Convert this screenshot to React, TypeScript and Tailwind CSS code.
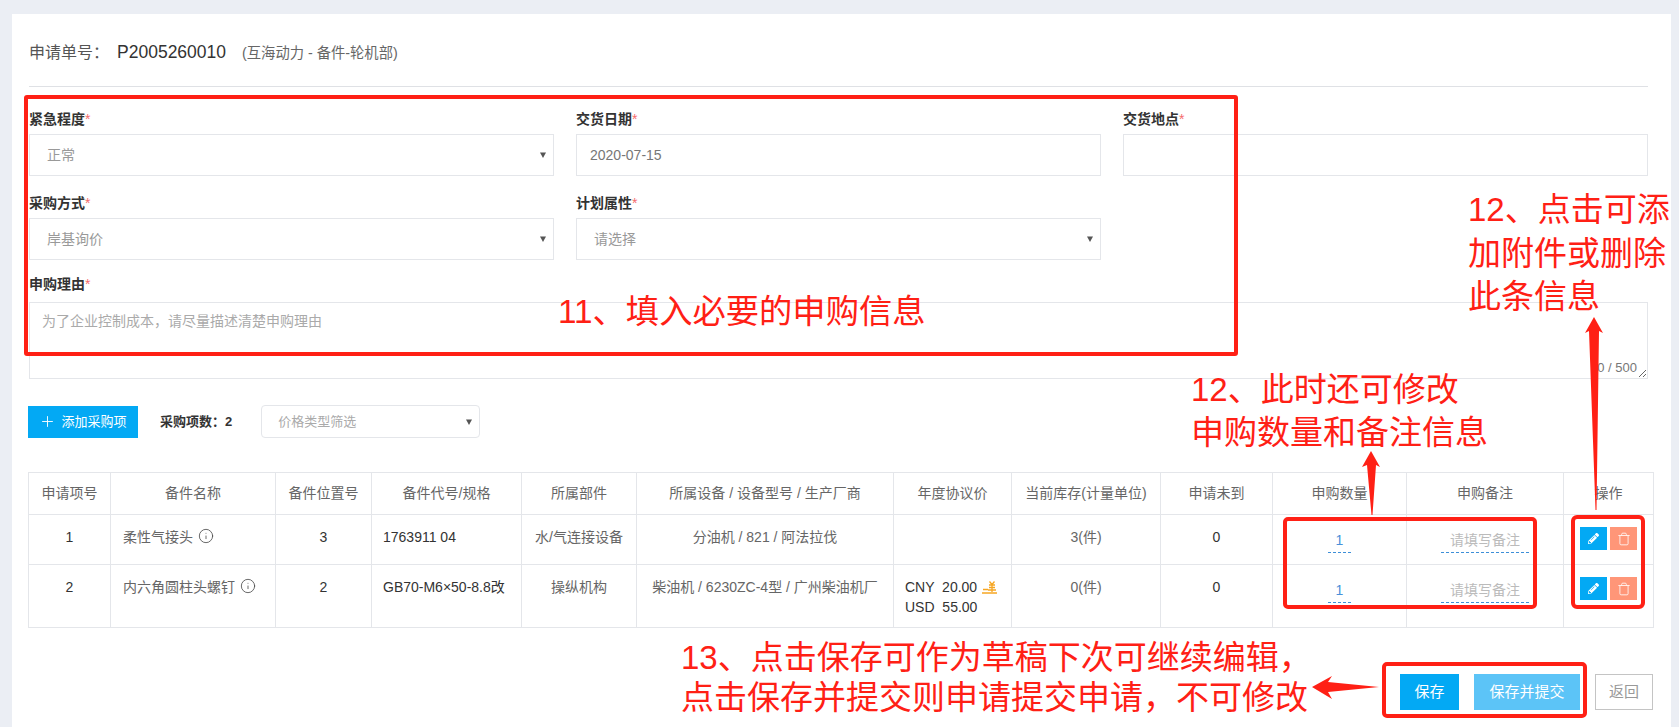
import { Info, Plus, Trash } from "lucide-react";
import { FaPencilAlt } from "react-icons/fa";

// full-width punctuation
const COLON = "\uFF1A";
const COMMA = "\uFF0C";

const Caret = () => (
  <svg width="8" height="7" viewBox="0 0 8 7" className="absolute right-[6px] top-1/2 -translate-y-1/2">
    <path d="M1 1h6L4 6.5z" fill="#555" />
  </svg>
);

const Label = ({ text }: { text: string }) => (
  <div className="h-5 leading-5 text-[14px] font-semibold text-[#333] mb-[5px]">
    {text}
    <span className="text-[#f56c6c] font-normal">*</span>
  </div>
);

const SelectBox = ({ value }: { value: string }) => (
  <div className="relative h-[42px] border border-[#e4e6ea] pl-[17px] flex items-center text-[14px] text-[#999]">
    {value}
    <Caret />
  </div>
);

const YuanIcon = () => (
  <svg width="15" height="13" viewBox="0 0 15 13" className="inline-block ml-[5px] -mt-[1px]">
    <path
      d="M0 12h15M1 8.500h5M7.500 0.500l2.500 3 2.500-3M7 4h6M7 6.500h6M6 9h8M10 4v7"
      fill="none"
      stroke="#f6a623"
      strokeWidth="1.3"
    />
  </svg>
);

const QtyInput = () => (
  <div className="mx-auto mt-[2px] w-[23px] h-[24px] leading-[22px] text-center text-[#4a90d9] border-b border-dashed border-[#3d8fd8]">
    1
  </div>
);

const RemarkInput = () => (
  <div className="mx-auto mt-[2px] w-[88px] h-[24px] leading-[22px] text-center text-[#bbb] border-b border-dashed border-[#3d8fd8]">
    请填写备注
  </div>
);

const Actions = () => (
  <div className="flex justify-center gap-[3px]">
    <button className="w-[27px] h-[23px] bg-[#03a9f4] flex items-center justify-center text-white">
      <FaPencilAlt size={11} />
    </button>
    <button className="w-[27px] h-[23px] bg-[#ff9678] flex items-center justify-center text-[#fff2ee]">
      <Trash size={14} strokeWidth={1.6} />
    </button>
  </div>
);

const headers = [
  "申请项号",
  "备件名称",
  "备件位置号",
  "备件代号/规格",
  "所属部件",
  "所属设备 / 设备型号 / 生产厂商",
  "年度协议价",
  "当前库存(计量单位)",
  "申请未到",
  "申购数量",
  "申购备注",
  "操作",
];

const widths = [82, 165, 96, 150, 115, 257, 118, 149, 112, 134, 157, 90];

const rows = [
  {
    no: "1",
    name: "柔性气接头",
    pos: "3",
    code: "1763911 04",
    part: "水/气连接设备",
    equip: "分油机 / 821 / 阿法拉伐",
    stock: "3(件)",
    height: "h-[50px]",
  },
  {
    no: "2",
    name: "内六角圆柱头螺钉",
    pos: "2",
    code: "GB70-M6×50-8.8改",
    part: "操纵机构",
    equip: "柴油机 / 6230ZC-4型 / 广州柴油机厂",
    stock: "0(件)",
    price: true,
    height: "h-[63px]",
  },
];

const cell = "border border-[#e4e6ea] align-top pt-[12px] text-center";

const boxes = [
  "left-[24px] top-[95px] w-[1214px] h-[261px] rounded-[3px]",
  "left-[1283px] top-[517px] w-[254px] h-[92px] rounded-[5px]",
  "left-[1571px] top-[515px] w-[74px] h-[94px] rounded-[6px]",
  "left-[1382px] top-[662px] w-[205px] h-[56px] rounded-[5px]",
];

export default function App() {
  return (
    <div className="relative h-[727px] overflow-hidden bg-[#ebeef4] pt-[14px] pl-[12px] pr-[8px] font-['Liberation_Sans','Noto_Sans_CJK_SC',sans-serif] text-[14px]">
      <div className="h-[713px] bg-white pl-[16px]">
        {/* Title */}
        <div className="ml-[1px] w-[1619px] h-[73px] pt-[25px] border-b border-[#dfe1e5] flex items-baseline">
          <span className="text-[16px] text-[#555]">申请单号{COLON}</span>
          <span className="ml-[8px] text-[17.5px] text-[#333]">P2005260010</span>
          <span className="ml-[16px] text-[14.3px] text-[#666]">(互海动力 - 备件-轮机部)</span>
        </div>

        {/* Form */}
        <div className="ml-[1px] w-[1619px] pt-[22px]">
          <div className="grid grid-cols-3 gap-x-[22px] gap-y-[17px]">
            <div>
              <Label text="紧急程度" />
              <SelectBox value="正常" />
            </div>
            <div>
              <Label text="交货日期" />
              <div className="h-[42px] border border-[#e4e6ea] pl-[13px] flex items-center text-[#777]">2020-07-15</div>
            </div>
            <div>
              <Label text="交货地点" />
              <div className="h-[42px] border border-[#e4e6ea]" />
            </div>
            <div>
              <Label text="采购方式" />
              <SelectBox value="岸基询价" />
            </div>
            <div>
              <Label text="计划属性" />
              <SelectBox value="请选择" />
            </div>
          </div>
          <div className="mt-[14px]">
            <div className="h-5 leading-5 font-semibold text-[#333] mb-[8px]">
              申购理由<span className="text-[#f56c6c] font-normal">*</span>
            </div>
            <div className="relative">
              <textarea
                readOnly
                placeholder={`为了企业控制成本${COMMA}请尽量描述清楚申购理由`}
                className="block w-full h-[77px] border border-[#e4e6ea] px-[12px] py-[8px] leading-[20px] text-[14px] outline-none placeholder:text-[#aaa]"
              />
              <span className="absolute right-[11px] bottom-[2px] text-[13px] text-[#777]">0 / 500</span>
            </div>
          </div>
        </div>

        {/* Toolbar */}
        <div className="mt-[26px] flex items-center h-[33px]">
          <button className="w-[110px] h-[32px] bg-[#03a9f4] text-white text-[13px] flex items-center justify-center gap-[5px]">
            <Plus size={17} strokeWidth={1.3} />
            添加采购项
          </button>
          <span className="ml-[22px] font-semibold text-[#333] text-[13px]">采购项数{COLON}2</span>
          <div className="relative ml-[22px] w-[219px] h-[33px] translate-x-[7px] border border-[#e4e6ea] rounded-[4px] pl-[16px] flex items-center text-[13px] text-[#aaa]">
            价格类型筛选
            <Caret />
          </div>
        </div>

        {/* Items table */}
        <table className="mt-[34px] w-[1625px] table-fixed border-collapse text-[#666]">
          <colgroup>
            {widths.map((w, i) => (
              <col key={i} style={{ width: w }} />
            ))}
          </colgroup>
          <thead>
            <tr className="h-[42px]">
              {headers.map((h) => (
                <th key={h} className="border border-[#e4e6ea] font-normal text-center">
                  {h}
                </th>
              ))}
            </tr>
          </thead>
          <tbody>
            {rows.map((r) => (
              <tr key={r.no} className={r.height}>
                <td className={`${cell} text-[#333]`}>{r.no}</td>
                <td className="border border-[#e4e6ea] align-top pt-[12px] pl-[12px]">
                  <span className="inline-flex items-center gap-[5px]">
                    {r.name}
                    <Info size={16} strokeWidth={1.2} className="text-[#444] -mt-[3px]" />
                  </span>
                </td>
                <td className={`${cell} text-[#333]`}>{r.pos}</td>
                <td className="border border-[#e4e6ea] align-top pt-[12px] pl-[11px] text-[#333]">{r.code}</td>
                <td className={cell}>{r.part}</td>
                <td className={cell}>{r.equip}</td>
                <td className="border border-[#e4e6ea] align-top pt-[12px] pl-[11px] text-[#333]">
                  {r.price && (
                    <div className="leading-[20px] whitespace-pre">
                      <div>
                        CNY{"  "}20.00
                        <YuanIcon />
                      </div>
                      <div>USD{"  "}55.00</div>
                    </div>
                  )}
                </td>
                <td className={cell}>{r.stock}</td>
                <td className={`${cell} text-[#333]`}>0</td>
                <td className={cell}>
                  <QtyInput />
                </td>
                <td className={cell}>
                  <RemarkInput />
                </td>
                <td className={cell}>
                  <Actions />
                </td>
              </tr>
            ))}
          </tbody>
        </table>

        {/* Footer buttons */}
        <div className="mt-[46px] w-[1625px] flex justify-end text-[15px]">
          <button className="w-[59px] h-[36px] bg-[#03a9f4] text-white">保存</button>
          <button className="ml-[15px] w-[106px] h-[36px] bg-[#5cc4f7] text-white">保存并提交</button>
          <button className="ml-[15px] w-[58px] h-[36px] border border-[#c4c4c4] text-[#999]">返回</button>
        </div>
      </div>

      {/* Red annotation boxes */}
      {boxes.map((b) => (
        <div key={b} className={`absolute border-[4px] border-[#ff2015] pointer-events-none ${b}`} />
      ))}

      {/* Red arrows */}
      <svg className="absolute inset-0 pointer-events-none" width="1679" height="727" viewBox="0 0 1679 727">
        <path d="M1371 451L1380 467L1376 465L1372.500 515L1371.500 515L1367 465L1362 467z" fill="#ff2015" />
        <path d="M1594 317L1603 333L1599 331L1596.500 510L1595.500 510L1589 331L1585 333z" fill="#ff2015" />
        <path d="M1312 687L1332 676L1328 682L1379 687L1328 692L1332 699z" fill="#ff2015" />
      </svg>

      {/* Red annotation text */}
      <div className="absolute left-[558px] top-[290px] text-[33.300px] leading-[44px] text-[#ff2015] whitespace-nowrap">
        11、填入必要的申购信息
      </div>
      <div className="absolute left-[1468px] top-[188px] text-[33px] leading-[43.500px] text-[#ff2015] whitespace-nowrap">
        <div>12、点击可添</div>
        <div>加附件或删除</div>
        <div>此条信息</div>
      </div>
      <div className="absolute left-[1191px] top-[368px] text-[33px] leading-[43px] text-[#ff2015] whitespace-nowrap">
        <div>12、此时还可修改</div>
        <div>申购数量和备注信息</div>
      </div>
      <div className="absolute left-[681px] top-[638px] text-[33px] leading-[40px] text-[#ff2015] whitespace-nowrap">
        <div>13、点击保存可作为草稿下次可继续编辑{COMMA}</div>
        <div>点击保存并提交则申请提交申请{COMMA}不可修改</div>
      </div>
    </div>
  );
}
